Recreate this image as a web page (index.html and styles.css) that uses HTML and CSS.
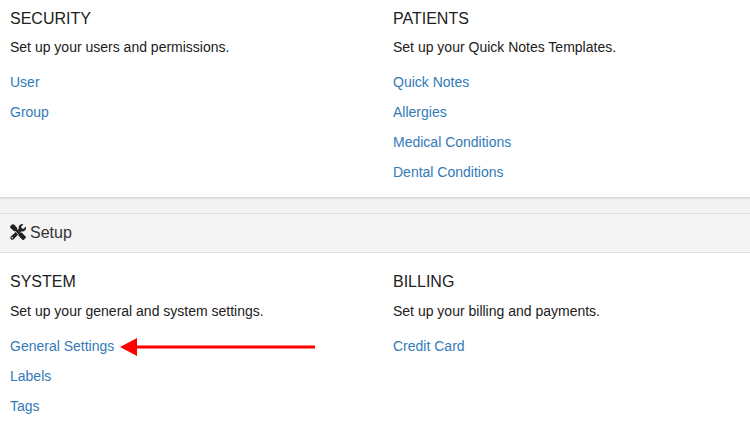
FILE: index.html
```html
<!DOCTYPE html>
<html>
<head>
	<meta charset="utf-8">
	<title>Setup</title>
	<link rel="stylesheet" href="styles.css">
</head>
<body>
<div class="panel">
	<div class="panel-body first">
		<div class="col">
			<h4>SECURITY</h4>
			<p>Set up your users and permissions.</p>
			<a href="#">User</a>
			<a href="#">Group</a>
		</div>
		<div class="col">
			<h4>PATIENTS</h4>
			<p>Set up your Quick Notes Templates.</p>
			<a href="#">Quick Notes</a>
			<a href="#">Allergies</a>
			<a href="#">Medical Conditions</a>
			<a href="#">Dental Conditions</a>
		</div>
	</div>
</div>

<div class="panel">
	<div class="panel-heading">
		<svg class="tools" viewBox="0 0 16 16" width="16" height="16">
			<path d="M0 2.6 L2.2 .2 L4.2 .6 L7.2 3.9 V5.6 L9 7.4 L10.3 8.6 H11.6 L15.9 12.8 V13.8 L13.7 16 H12.7 L8.5 11.7 V10.2 L5.6 7.3 H4.2 L.4 3.9 Z"/>
			<path d="M13.4 .2 L11.3 2.4 L11.6 4.4 L13.6 4.8 L15.8 2.6 Q16.5 4.8 14.9 6.4 Q13.4 7.8 11.4 7.2 L9.9 8.5 L7.4 6.1 L8.8 4.8 Q8.2 2.6 9.7 1.1 Q11.4 -.4 13.4 .2 Z"/>
			<path fill-rule="evenodd" d="M5.7 8 L8.1 10.4 L3.7 15.2 Q2.2 16.4 .9 15.2 Q-.3 13.8 .9 12.5 Z M2.3 13 A.8 .8 0 1 0 2.3 14.6 A.8 .8 0 1 0 2.3 13 Z"/>
		</svg>
		<span>Setup</span>
	</div>
	<div class="panel-body">
		<div class="col">
			<h4>SYSTEM</h4>
			<p>Set up your general and system settings.</p>
			<div class="marked">
				<a href="#">General Settings</a>
				<svg class="arrow" viewBox="0 0 195 18" width="195" height="18">
					<path d="M0 9 L17 0 V7.5 H195 V10.5 H17 V18 Z"/>
				</svg>
			</div>
			<a href="#">Labels</a>
			<a href="#">Tags</a>
		</div>
		<div class="col">
			<h4>BILLING</h4>
			<p>Set up your billing and payments.</p>
			<a href="#">Credit Card</a>
		</div>
	</div>
</div>
</body>
</html>
```
FILE: styles.css
```css
* {box-sizing: border-box;}
body {margin: 0; background: #f2f2f2; color: #212121; font: 14px/20px "Liberation Sans", Arial, sans-serif; overflow: hidden;}
.panel {background: #fff; border-bottom: 1px solid #d8d8d8; margin-bottom: 15px; box-shadow: 0 1px 1px rgba(0,0,0,.05);}
.panel-heading {height: 40px; display: flex; align-items: center; gap: 4px; padding: 0 10px; background: #f4f4f4; border-top: 1px solid #ddd; border-bottom: 1px solid #ddd; color: #333; font-size: 16px;}
.panel-body {display: flex; padding: 19px 10px 10px;}
.panel-body.first {height: 197px; padding-top: 9px;}
.first h4 {margin-bottom: 8px;}
.col {flex: 0 0 383px;}
h4 {margin: 0 0 9px; font-size: 16px; line-height: 20px; font-weight: normal;}
p {margin: 0 0 10px;}
a {display: block; padding: 5px 0; color: #337ab7; text-decoration: none;}
.marked {display: flex; align-items: center; gap: 6px;}
.tools {fill: #222; margin-bottom: 2px;}
.arrow {fill: #f00; margin-top: 2px;}
```
